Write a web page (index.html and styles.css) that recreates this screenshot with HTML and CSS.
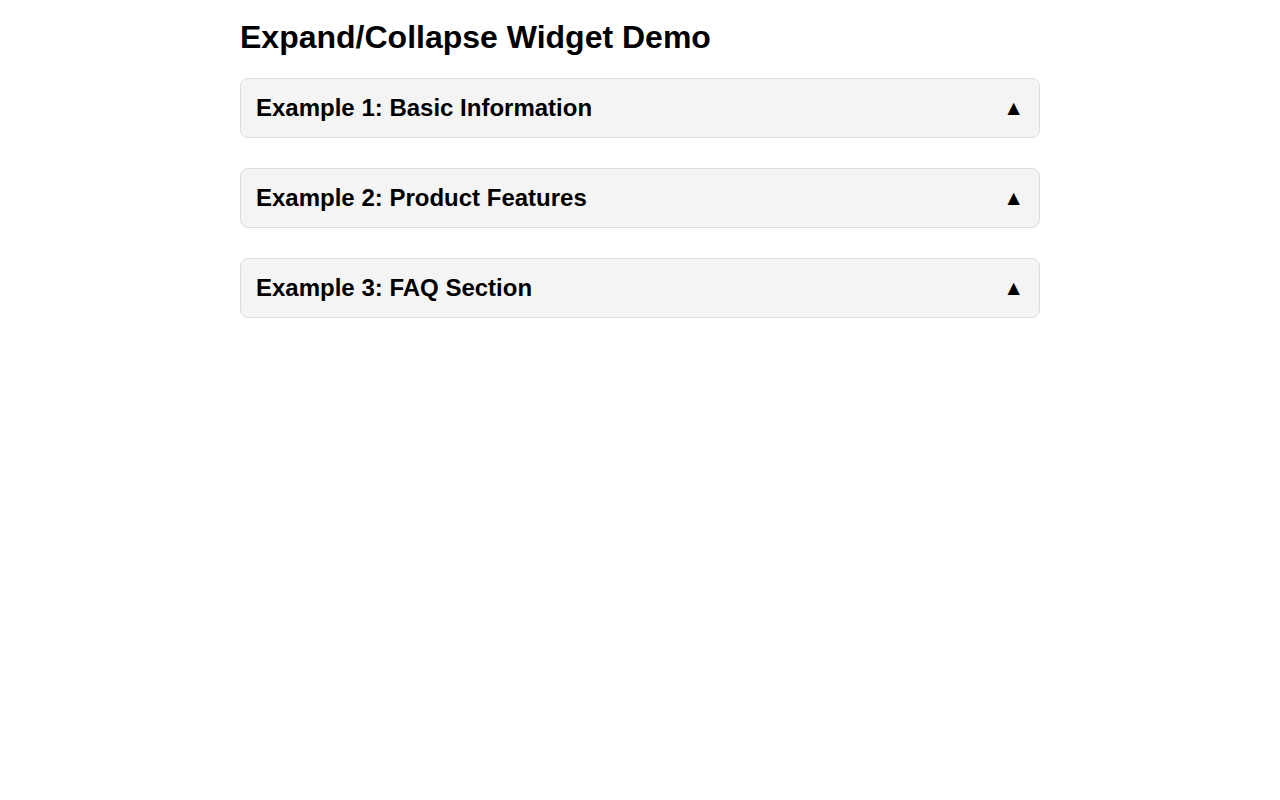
FILE: index.html
```html
<!DOCTYPE html>
<html lang="en">
<head>
    <meta charset="UTF-8">
    <meta name="viewport" content="width=device-width, initial-scale=1.0">
    <title>Expand/Collapse Widget Demo</title>
    <link rel="stylesheet" href="styles.css">
</head>
<body>
    <div class="container">
        <h1>Expand/Collapse Widget Demo</h1>

        <div class="widget">
            <div class="widget-header">
                <h2>Example 1: Basic Information</h2>
                <span class="toggle-icon">&#9650;</span>
            </div>
        </div>

        <div class="widget">
            <div class="widget-header">
                <h2>Example 2: Product Features</h2>
                <span class="toggle-icon">&#9650;</span>
            </div>
        </div>

        <div class="widget">
            <div class="widget-header">
                <h2>Example 3: FAQ Section</h2>
                <span class="toggle-icon">&#9650;</span>
            </div>
        </div>
    </div>
</body>
</html>
```

FILE: styles.css
```css
body {
    margin: 0;
    padding: 0;
    font-family: Arial, "Liberation Sans", sans-serif;
    background: #fff;
    color: #000;
}

.container {
    width: 800px;
    margin: 0 auto;
    padding-top: 19px;
}

h1 {
    font-size: 32px;
    margin: 0 0 22px;
}

.widget {
    border: 1px solid #ddd;
    border-radius: 8px;
    background: #f4f4f4;
    margin-bottom: 30px;
}

.widget-header {
    display: flex;
    justify-content: space-between;
    align-items: center;
    padding: 15px;
    cursor: pointer;
}

.widget-header h2 {
    font-size: 24px;
    margin: 0;
}

.toggle-icon {
    font-size: 21px;
}
```
